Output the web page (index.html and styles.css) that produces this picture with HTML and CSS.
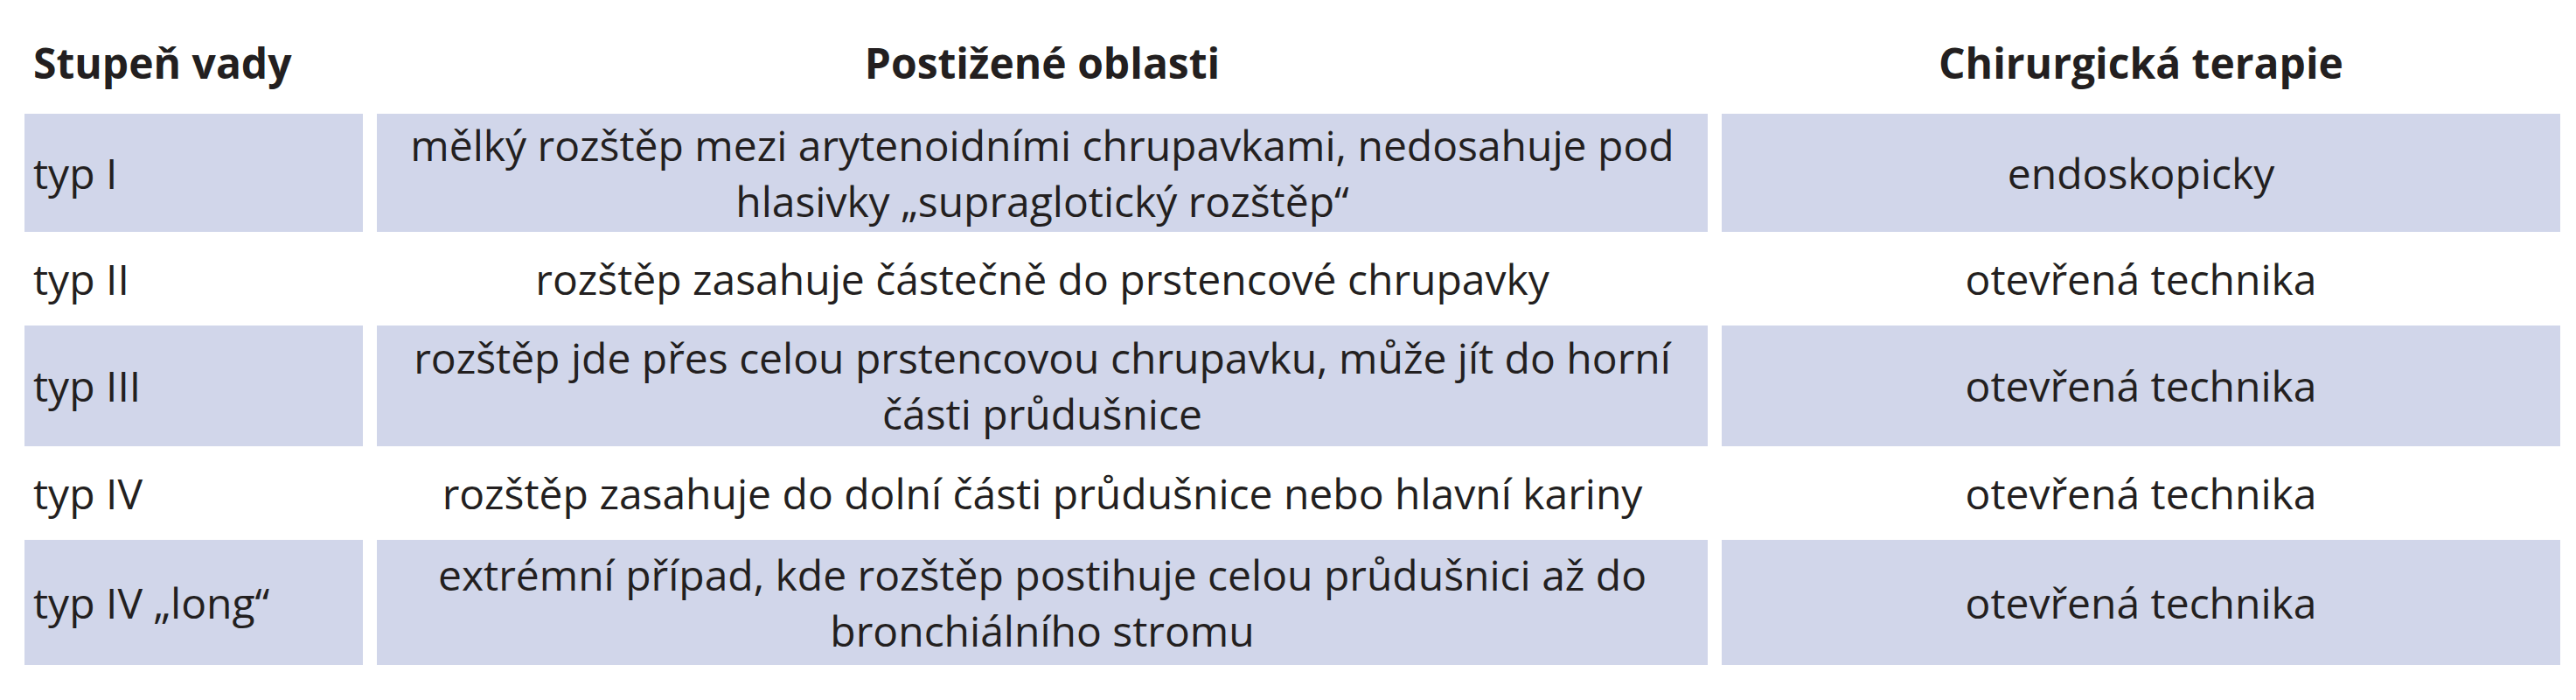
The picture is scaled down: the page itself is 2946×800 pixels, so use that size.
FILE: index.html
```html
<!DOCTYPE html>
<html lang="cs">
<head>
<meta charset="utf-8">
<title>Tabulka</title>
<link rel="stylesheet" href="styles.css">
</head>
<body>
<div class="table">
  <div class="th left">Stupeň vady</div>
  <div class="th">Postižené oblasti</div>
  <div class="th">Chirurgická terapie</div>

  <div class="td left blue">typ I</div>
  <div class="td blue">mělký rozštěp mezi arytenoidními chrupavkami, nedosahuje pod<br>hlasivky „supraglotický rozštěp“</div>
  <div class="td blue">endoskopicky</div>

  <div class="td left">typ II</div>
  <div class="td">rozštěp zasahuje částečně do prstencové chrupavky</div>
  <div class="td">otevřená technika</div>

  <div class="td left blue">typ III</div>
  <div class="td blue">rozštěp jde přes celou prstencovou chrupavku, může jít do horní<br>části průdušnice</div>
  <div class="td blue">otevřená technika</div>

  <div class="td left">typ IV</div>
  <div class="td">rozštěp zasahuje do dolní části průdušnice nebo hlavní kariny</div>
  <div class="td">otevřená technika</div>

  <div class="td left blue">typ IV „long“</div>
  <div class="td blue">extrémní případ, kde rozštěp postihuje celou průdušnici až do<br>bronchiálního stromu</div>
  <div class="td blue">otevřená technika</div>
</div>
</body>
</html>
```

FILE: styles.css
```css
html, body {
  margin: 0;
  padding: 0;
  background: #ffffff;
}

body {
  font-family: "Open Sans", "DejaVu Sans Condensed", sans-serif;
  color: #231f20;
}

.table {
  display: grid;
  grid-template-columns: 387px 1522px 959px;
  grid-template-rows: 130px 135px 107px 138px 107px 143px;
  column-gap: 16px;
  padding-left: 28px;
}

.th, .td {
  display: flex;
  align-items: center;
  justify-content: center;
  text-align: center;
  white-space: nowrap;
}

.td {
  font-size: 48px;
  font-stretch: 95%;
  line-height: 64px;
}

.th {
  font-size: 48px;
  font-stretch: 92%;
  line-height: 60px;
  font-weight: bold;
  padding-top: 14px;
}

.left {
  justify-content: flex-start;
  text-align: left;
  padding-left: 10px;
}

.blue {
  background: #d1d6ea;
}
```
